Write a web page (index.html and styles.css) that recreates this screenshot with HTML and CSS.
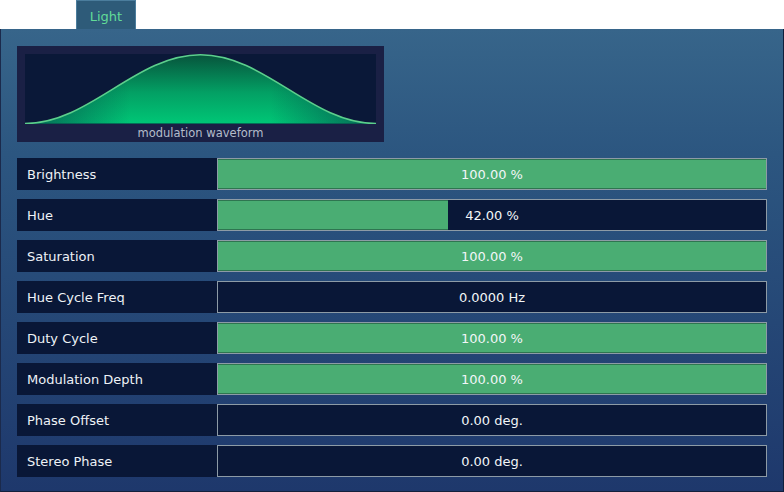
FILE: index.html
```html
<!DOCTYPE html>
<html>
<head>
<meta charset="utf-8">
<link rel="stylesheet" href="styles.css">
</head>
<body>
<div class="tabs">
  <div class="tab">Light</div>
</div>
<div class="panel">
  <div class="wave">
    <div class="plot">
      <svg width="351" height="70" viewBox="0 0 351 70">
        <defs>
          <linearGradient id="gv" x1="0" y1="0" x2="0" y2="1">
            <stop offset="0" stop-color="#07543c"/>
            <stop offset="0.55" stop-color="#03a064"/>
            <stop offset="1" stop-color="#00c676"/>
          </linearGradient>
          <linearGradient id="gh" x1="0" y1="0" x2="1" y2="0">
            <stop offset="0" stop-color="#0a1838" stop-opacity="0.55"/>
            <stop offset="0.3" stop-color="#0a1838" stop-opacity="0"/>
            <stop offset="0.7" stop-color="#0a1838" stop-opacity="0"/>
            <stop offset="1" stop-color="#0a1838" stop-opacity="0.55"/>
          </linearGradient>
        </defs>
        <path d="M0,69.5 C64.9,69.5 110.6,0.8 175.5,0.8 C240.4,0.8 286.1,69.5 351,69.5 Z" fill="url(#gv)"/>
        <path d="M0,69.5 C64.9,69.5 110.6,0.8 175.5,0.8 C240.4,0.8 286.1,69.5 351,69.5 Z" fill="url(#gh)"/>
        <path d="M0,69.5 C64.9,69.5 110.6,0.8 175.5,0.8 C240.4,0.8 286.1,69.5 351,69.5" fill="none" stroke="#5ccf8c" stroke-width="1.6"/>
      </svg>
    </div>
    <div class="wave-label">modulation waveform</div>
  </div>
  <div class="rows">
    <div class="row"><div class="label">Brightness</div><div class="bar"><div class="fill" style="width:100%"></div><span class="val">100.00 %</span></div></div>
    <div class="row"><div class="label">Hue</div><div class="bar"><div class="fill" style="width:42%"></div><span class="val">42.00 %</span></div></div>
    <div class="row"><div class="label">Saturation</div><div class="bar"><div class="fill" style="width:100%"></div><span class="val">100.00 %</span></div></div>
    <div class="row"><div class="label">Hue Cycle Freq</div><div class="bar"><span class="val">0.0000 Hz</span></div></div>
    <div class="row"><div class="label">Duty Cycle</div><div class="bar"><div class="fill" style="width:100%"></div><span class="val">100.00 %</span></div></div>
    <div class="row"><div class="label">Modulation Depth</div><div class="bar"><div class="fill" style="width:100%"></div><span class="val">100.00 %</span></div></div>
    <div class="row"><div class="label">Phase Offset</div><div class="bar"><span class="val">0.00 deg.</span></div></div>
    <div class="row"><div class="label">Stereo Phase</div><div class="bar"><span class="val">0.00 deg.</span></div></div>
  </div>
</div>
</body>
</html>
```
FILE: styles.css
```css
* { box-sizing: border-box; }
html, body { margin: 0; padding: 0; background: #ffffff; }
body {
  width: 784px;
  height: 492px;
  overflow: hidden;
  font-family: "DejaVu Sans", Verdana, sans-serif;
  font-size: 13px;
  color: #eef2f6;
}
.tabs {
  height: 29px;
  display: flex;
  padding-left: 76px;
}
.tab {
  width: 60px;
  height: 29px;
  background: #2e5b79;
  border: 1px solid #4b7d9d;
  border-bottom: none;
  color: #62dc98;
  font-size: 13px;
  display: flex;
  align-items: center;
  justify-content: center;
  padding-top: 2px;
}
.panel {
  height: 463px;
  background: linear-gradient(to bottom, #37658a 0%, #2c5680 27%, #1e386c 100%);
  border-left: 1px solid #1b2a4c;
  border-right: 1px solid #0f1f3c;
  border-bottom: 1px solid #14203c;
  padding: 17px 16px 14px 16px;
  display: flex;
  flex-direction: column;
  gap: 16px;
}
.wave {
  width: 367px;
  height: 96px;
  background: #1a2045;
  padding: 8px 8px 0 8px;
  display: flex;
  flex-direction: column;
}
.plot {
  width: 351px;
  height: 70px;
  background: #0a1838;
}
.plot svg { display: block; }
.wave-label {
  height: 18px;
  text-align: center;
  color: #b4bccb;
  font-size: 11.5px;
  line-height: 19px;
}
.rows {
  display: flex;
  flex-direction: column;
  gap: 9px;
}
.row {
  display: flex;
  height: 32px;
}
.label {
  width: 200px;
  background: #091737;
  padding-left: 10px;
  display: flex;
  align-items: center;
  color: #eef2f6;
}
.bar {
  position: relative;
  width: 550px;
  height: 32px;
  background: #091737;
  border: 1px solid #8d9ba6;
  display: flex;
  align-items: center;
  justify-content: center;
}
.fill {
  position: absolute;
  left: 0;
  top: 0;
  bottom: 0;
  background: #4aad73;
  border-top: 1px solid #2e7550;
  border-bottom: 1px solid #2e7550;
}
.val {
  position: relative;
  color: #f2f6f8;
}
```
